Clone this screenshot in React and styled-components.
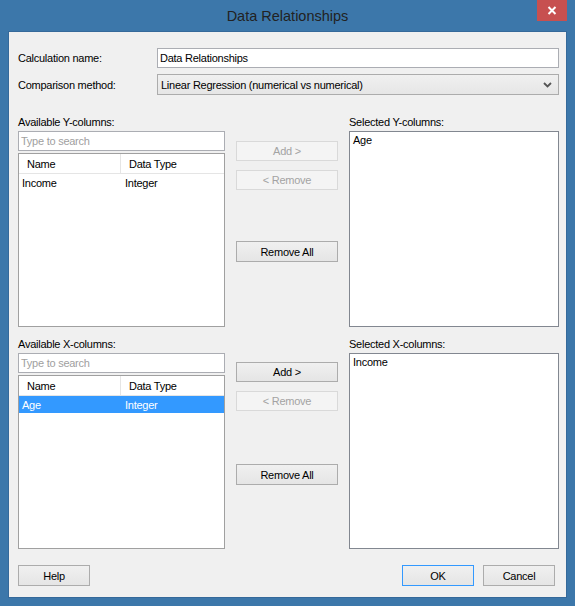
import React from "react";
import styled, { createGlobalStyle, css } from "styled-components";

const Global = createGlobalStyle`
  html, body { margin: 0; padding: 0; }
  body {
    width: 575px; height: 606px; overflow: hidden;
    background: #3c77aa;
    font-family: "Liberation Sans", Arial, sans-serif;
    font-size: 11px;
    letter-spacing: -0.25px;
    color: #000;
  }
  * { box-sizing: border-box; }
`;

const Window = styled.div`
  width: 575px;
  height: 606px;
  display: flex;
  flex-direction: column;
  padding: 0 8px 8px;
  background: #3c77aa;
`;

const TitleBar = styled.div`
  height: 31px;
  display: grid;
  grid-template-columns: 1fr auto 1fr;
  align-items: start;
`;

const Title = styled.div`
  grid-column: 2;
  line-height: 33px;
  font-size: 14.5px;
  letter-spacing: 0;
  color: #222;
`;

const CloseButton = styled.div`
  grid-column: 3;
  justify-self: end;
  width: 30px;
  height: 21px;
  background: #c75050;
  display: flex;
  align-items: center;
  justify-content: center;
`;

const Client = styled.div`
  flex: 1;
  background: #f0f0f0;
  border: 1px solid #35699a;
  padding: 16px 7px 11px 9px;
  display: flex;
  flex-direction: column;
`;

const Form = styled.div`
  display: grid;
  grid-template-columns: 139px 1fr;
  row-gap: 6px;
  align-items: center;
`;

const FieldLabel = styled.label`
  white-space: nowrap;
`;

const TextBox = styled.div`
  height: ${(p) => p.$h || 20}px;
  border: 1px solid #abadb3;
  background: #fff;
  padding-left: 2px;
  display: flex;
  align-items: center;
  color: ${(p) => (p.$placeholder ? "#a0a0a0" : "#000")};
  white-space: nowrap;
`;

const Combo = styled.div`
  height: 21px;
  border: 1px solid #acacac;
  background: linear-gradient(#f0f0f0, #e6e6e6);
  padding: 0 6px 0 3px;
  display: flex;
  align-items: center;
  justify-content: space-between;
`;

const Section = styled.div`
  margin-top: ${(p) => p.$top}px;
  display: grid;
  grid-template-columns: 207px 102px 210px;
  grid-template-rows: 15px 196px;
  column-gap: 11px;
  row-gap: 1px;
`;

const SectionLabel = styled.div`
  grid-column: ${(p) => p.$col};
  line-height: 15px;
  white-space: nowrap;
`;

const LeftColumn = styled.div`
  grid-column: 1;
  display: flex;
  flex-direction: column;
  gap: 2px;
`;

const ListView = styled.div`
  flex: 1;
  border: 1px solid #a0a0a0;
  background: #fff;
`;

const ListRow = styled.div`
  display: grid;
  grid-template-columns: 102px 1fr;
  height: ${(p) => (p.$header ? 20 : 17)}px;
  align-items: center;
  ${(p) =>
    p.$header &&
    css`
      border-bottom: 1px solid #e5e5e5;
      background: #fff;
    `}
  ${(p) =>
    p.$selected &&
    css`
      background: #3399ff;
      color: #fff;
    `}
`;

const HeaderCell = styled.div`
  height: 100%;
  display: flex;
  align-items: center;
  padding-left: 8px;
  border-right: ${(p) => (p.$divider ? "1px solid #e5e5e5" : "none")};
`;

const Cell = styled.div`
  padding-left: ${(p) => p.$pad}px;
  white-space: nowrap;
`;

const MiddleColumn = styled.div`
  grid-column: 2;
  display: flex;
  flex-direction: column;
  padding-top: ${(p) => p.$pt}px;
  gap: 9px;
`;

const Button = styled.div`
  width: ${(p) => p.$w || 102}px;
  height: ${(p) => p.$h || 20}px;
  margin-top: ${(p) => p.$mt || 0}px;
  display: flex;
  align-items: center;
  justify-content: center;
  border: 1px solid ${(p) => (p.$default ? "#3399ff" : "#acacac")};
  background: linear-gradient(#f0f0f0, #e5e5e5);
  color: #000;
  ${(p) =>
    p.$disabled &&
    css`
      border-color: #d9d9d9;
      background: #f4f4f4;
      color: #a3a3a3;
    `}
`;

const SelectedBox = styled.div`
  grid-column: 3;
  border: 1px solid #828790;
  background: #fff;
  padding: 1px 3px;
  line-height: 14px;
`;

const Footer = styled.div`
  margin-top: 16px;
  display: flex;
  align-items: center;
  gap: 9px;
  padding-right: 4px;
`;

const Spacer = styled.div`
  flex: 1;
`;

function Chevron() {
  return (
    <svg width="9" height="6" viewBox="0 0 9 6">
      <polyline points="1,1 4.5,4.5 8,1" fill="none" stroke="#555" strokeWidth="1.8" />
    </svg>
  );
}

function CloseX() {
  return (
    <svg width="10" height="9" viewBox="0 0 10 9">
      <path d="M1.5 1 L8.5 8 M8.5 1 L1.5 8" stroke="#fff" strokeWidth="2" />
    </svg>
  );
}

function ColumnsSection({ top, avail, selected, item, addEnabled, pt, gapAll }) {
  return (
    <Section $top={top}>
      <SectionLabel $col={1}>{avail}</SectionLabel>
      <SectionLabel $col={3}>{selected}</SectionLabel>
      <LeftColumn>
        <TextBox $placeholder>Type to search</TextBox>
        <ListView>
          <ListRow $header>
            <HeaderCell $divider>Name</HeaderCell>
            <HeaderCell>Data Type</HeaderCell>
          </ListRow>
          <ListRow $selected={item.selected}>
            <Cell $pad={3}>{item.name}</Cell>
            <Cell $pad={4}>{item.type}</Cell>
          </ListRow>
        </ListView>
      </LeftColumn>
      <MiddleColumn $pt={pt}>
        <Button $disabled={!addEnabled}>Add &gt;</Button>
        <Button $disabled>&lt; Remove</Button>
        <Button $mt={gapAll} $h={21}>Remove All</Button>
      </MiddleColumn>
      <SelectedBox>{item.chosen}</SelectedBox>
    </Section>
  );
}

export default function App() {
  return (
    <>
      <Global />
      <Window>
        <TitleBar>
          <Title>Data Relationships</Title>
          <CloseButton>
            <CloseX />
          </CloseButton>
        </TitleBar>
        <Client>
          <Form>
            <FieldLabel>Calculation name:</FieldLabel>
            <TextBox>Data Relationships</TextBox>
            <FieldLabel>Comparison method:</FieldLabel>
            <Combo>
              <span>Linear Regression (numerical vs numerical)</span>
              <Chevron />
            </Combo>
          </Form>
          <ColumnsSection
            top={20}
            pt={10}
            gapAll={42}
            avail="Available Y-columns:"
            selected="Selected Y-columns:"
            item={{ name: "Income", type: "Integer", chosen: "Age" }}
          />
          <ColumnsSection
            top={10}
            pt={9}
            gapAll={44}
            avail="Available X-columns:"
            selected="Selected X-columns:"
            item={{ name: "Age", type: "Integer", chosen: "Income", selected: true }}
            addEnabled
          />
          <Footer>
            <Button $w={72} $h={21}>Help</Button>
            <Spacer />
            <Button $w={72} $h={21} $default>OK</Button>
            <Button $w={72} $h={21}>Cancel</Button>
          </Footer>
        </Client>
      </Window>
    </>
  );
}
